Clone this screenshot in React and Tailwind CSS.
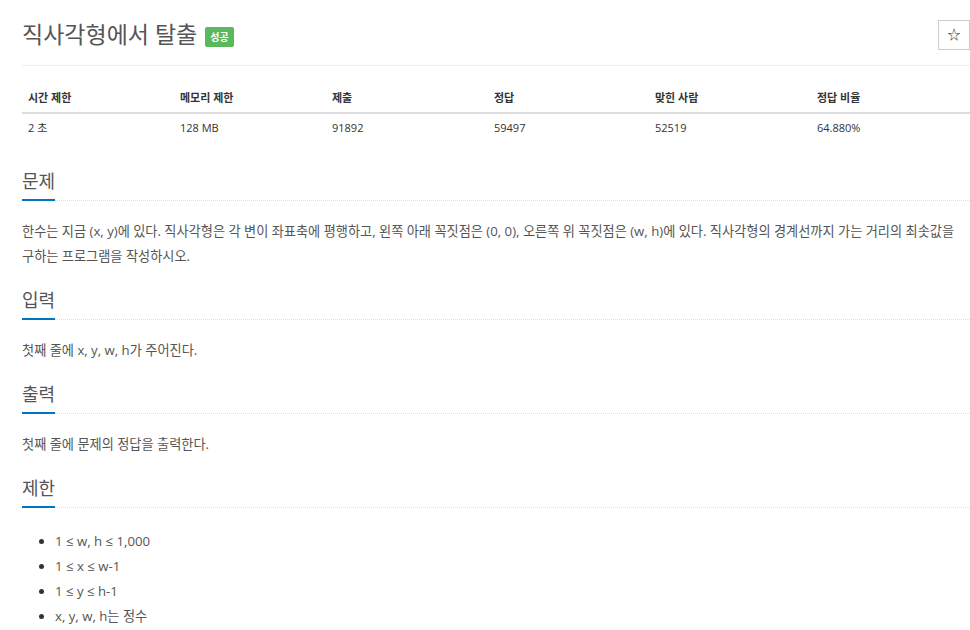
import React from "react";

const STATS = [
  { label: "시간 제한", value: "2 초", w: "w-[152px]" },
  { label: "메모리 제한", value: "128 MB", w: "w-[152px]" },
  { label: "제출", value: "91892", w: "w-[162px]" },
  { label: "정답", value: "59497", w: "w-[161px]" },
  { label: "맞힌 사람", value: "52519", w: "w-[162px]" },
  { label: "정답 비율", value: "64.880%", w: "" },
];

function SectionTitle({ children }) {
  return (
    <div className="relative mt-[18px] border-b border-dotted border-[#ddd] pb-[6px]">
      <h2 className="text-[18px] leading-[26px] text-[#555]">{children}</h2>
      <div className="absolute left-0 -bottom-px h-[2px] w-[33px] bg-[#0076c0]" />
    </div>
  );
}

export default function App() {
  return (
    <div
      className="min-h-screen w-[970px] overflow-hidden bg-white pl-[22px] text-[#555]"
      style={{ fontFamily: '"Open Sans", "Noto Sans CJK KR", sans-serif' }}
    >
      {/* title row */}
      <div className="flex items-start justify-between border-b border-[#eee] pt-[19px] pb-[15px]">
        <div className="flex items-end gap-[8px]">
          <h1 className="text-[23px] leading-[30px] text-[#555]">직사각형에서 탈출</h1>
          <span className="mb-[2px] rounded-[2px] bg-[#5cb85c] px-[5px] py-[4px] text-[10px] font-bold leading-[12px] text-white">
            성공
          </span>
        </div>
        <button className="mt-px flex h-[30px] w-[32px] items-center justify-center border border-[#ccc] bg-white text-[13px] text-[#333]">
          ☆
        </button>
      </div>

      {/* stats table */}
      <div className="mt-[24px] text-[11px] text-[#333]">
        <div className="flex border-b-2 border-[#ddd] pb-[5px]">
          {STATS.map((s) => (
            <div key={s.label} className={`${s.w} pl-[6px] font-bold`}>
              {s.label}
            </div>
          ))}
        </div>
        <div className="flex pt-[6px]">
          {STATS.map((s) => (
            <div key={s.label} className={`${s.w} pl-[6px]`}>
              {s.value}
            </div>
          ))}
        </div>
      </div>

      <div className="mt-[32px]">
        <SectionTitle>문제</SectionTitle>
        <p className="mt-[18px] break-keep text-[13.2px] leading-[25px]">
          한수는 지금 (x, y)에 있다. 직사각형은 각 변이 좌표축에 평행하고, 왼쪽 아래 꼭짓점은 (0, 0), 오른쪽 위 꼭짓점은 (w, h)에 있다. 직사각형의 경계선까지 가는 거리의 최솟값을 구하는 프로그램을 작성하시오.
        </p>

        <SectionTitle>입력</SectionTitle>
        <p className="mt-[18px] text-[13.2px] leading-[25px]">첫째 줄에 x, y, w, h가 주어진다.</p>

        <SectionTitle>출력</SectionTitle>
        <p className="mt-[18px] text-[13.2px] leading-[25px]">첫째 줄에 문제의 정답을 출력한다.</p>

        <SectionTitle>제한</SectionTitle>
        <ul className="mt-[21px] list-disc pl-[33px] text-[13.2px] leading-[25px] marker:text-[#333]">
          <li>1 ≤ w, h ≤ 1,000</li>
          <li>1 ≤ x ≤ w-1</li>
          <li>1 ≤ y ≤ h-1</li>
          <li>x, y, w, h는 정수</li>
        </ul>
      </div>
    </div>
  );
}
